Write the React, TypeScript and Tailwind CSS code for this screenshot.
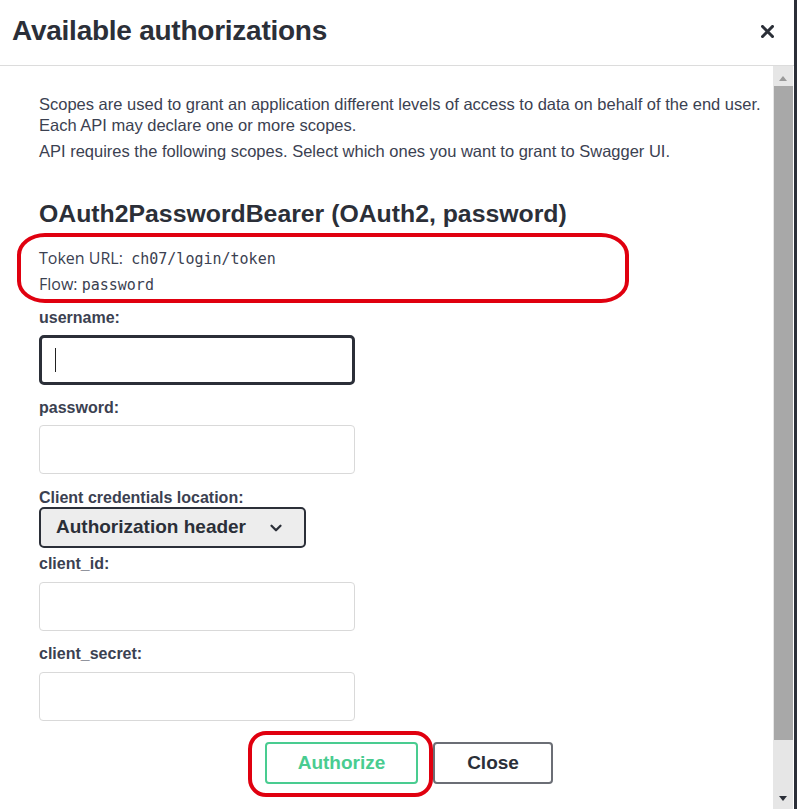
import { ChevronDown } from 'lucide-react'

const sans = 'font-["Liberation_Sans",Arial,sans-serif]'

function Label({ children }: { children: string }) {
  return <label className="text-[16px] font-bold text-[#3b4151] leading-[18px]">{children}</label>
}

function Field({ label, focused, loose }: { label: string; focused?: boolean; loose?: boolean }) {
  const box = focused
    ? 'mt-[8px] w-[316px] h-[50px] rounded-[5px] border-[3px] border-[#2b2f38] flex items-center pl-[13px]'
    : loose
      ? 'mt-[9px] w-[316px] h-[49px] rounded-[4px] border border-[#d9d9d9]'
      : 'mt-[8px] w-[316px] h-[49px] rounded-[4px] border border-[#d9d9d9]'
  return (
    <div className="flex flex-col">
      <Label>{label}</Label>
      <div className={box}>{focused && <div className="w-px h-[24px] bg-[#222]" />}</div>
    </div>
  )
}

export default function App() {
  return (
    <div className={`${sans} relative w-[797px] h-[809px] bg-white overflow-hidden flex flex-col border-r-[3px] border-[#2b2f38]`}>
      <header className="h-[66px] shrink-0 flex items-center justify-between border-b border-[#dcdcdc] pl-[12px] pr-[20px]">
        <h1 className="text-[28px] font-bold text-[#2b2f38] tracking-[-0.25px] pb-[4px]">Available authorizations</h1>
        <svg width="13" height="13" viewBox="0 0 13 13" className="mb-[3px]">
          <path d="M1.5 1.5 L11.5 11.5 M11.5 1.5 L1.5 11.5" stroke="#2b2f38" strokeWidth="3" strokeLinecap="square" />
        </svg>
      </header>

      <div className="flex flex-1 min-h-0">
        <main className="flex-1 pl-[39px] pt-[28px] text-[#3b4151]">
          <p className="text-[16.5px] leading-[21px]">
            Scopes are used to grant an application different levels of access to data on behalf of the end user.
            <br />
            Each API may declare one or more scopes.
          </p>
          <p className="text-[16.5px] leading-[21px] mt-[5px]">
            API requires the following scopes. Select which ones you want to grant to Swagger UI.
          </p>

          <h2 className="text-[24.8px] font-bold text-[#2b2f38] mt-[37px] leading-[30px]">
            OAuth2PasswordBearer (OAuth2, password)
          </h2>

          <div className='mt-[17px] font-["Open_Sans",sans-serif] text-[16px] text-[#3b4151] leading-[25px]'>
            <div>
              Token URL:&nbsp; <code className='font-["DejaVu_Sans_Mono",monospace] text-[15px]'>ch07/login/token</code>
            </div>
            <div>
              Flow: <code className='font-["DejaVu_Sans_Mono",monospace] text-[15px]'>password</code>
            </div>
          </div>

          <div className="mt-[11px] flex flex-col gap-[14px]">
            <Field label="username:" focused />
            <Field label="password:" />
          </div>

          <div className="mt-[15px] flex flex-col">
            <Label>Client credentials location:</Label>
            <div className="w-[267px] h-[41px] rounded-[5px] border-[2px] border-[#2b2f38] bg-[#ededed] flex items-center pl-[15px] gap-[21px]">
              <span className="text-[19px] font-bold text-[#2b2f38]">Authorization header</span>
              <ChevronDown size={18} strokeWidth={3} className="text-[#2b2f38]" />
            </div>
          </div>

          <div className="mt-[7px] flex flex-col gap-[14px]">
            <Field label="client_id:" loose />
            <Field label="client_secret:" loose />
          </div>

          <div className="mt-[21px] flex gap-[15px] pl-[226px]">
            <button className="w-[153px] h-[42px] rounded-[4px] border-2 border-[#49cc90] text-[#49cc90] text-[19px] font-bold">
              Authorize
            </button>
            <button className="w-[120px] h-[42px] rounded-[4px] border-2 border-[#6b6e75] text-[#2b2f38] text-[19px] font-bold">
              Close
            </button>
          </div>
        </main>

        <div className="w-[20px] shrink-0 bg-[#e6e6e6] flex flex-col items-center mr-[1px]">
          <svg width="8" height="5" viewBox="0 0 8 5" className="mt-[10px]">
            <path d="M0 5 L4 0 L8 5 Z" fill="#9a9a9a" />
          </svg>
          <div className="mt-[5px] w-[19px] h-[654px] bg-[#a8a8a8]" />
          <div className="flex-1" />
          <svg width="8" height="5" viewBox="0 0 8 5" className="mb-[8px]">
            <path d="M0 0 L8 0 L4 5 Z" fill="#2b2f38" />
          </svg>
        </div>
      </div>

      {/* red annotation marks */}
      <div className="absolute left-[17px] top-[233px] w-[612px] h-[70px] border-[4px] border-[#e0000f] rounded-[28px/22px] pointer-events-none" />
      <div className="absolute left-[248px] top-[731px] w-[185px] h-[66px] border-[4px] border-[#e0000f] rounded-[18px] pointer-events-none" />
    </div>
  )
}
